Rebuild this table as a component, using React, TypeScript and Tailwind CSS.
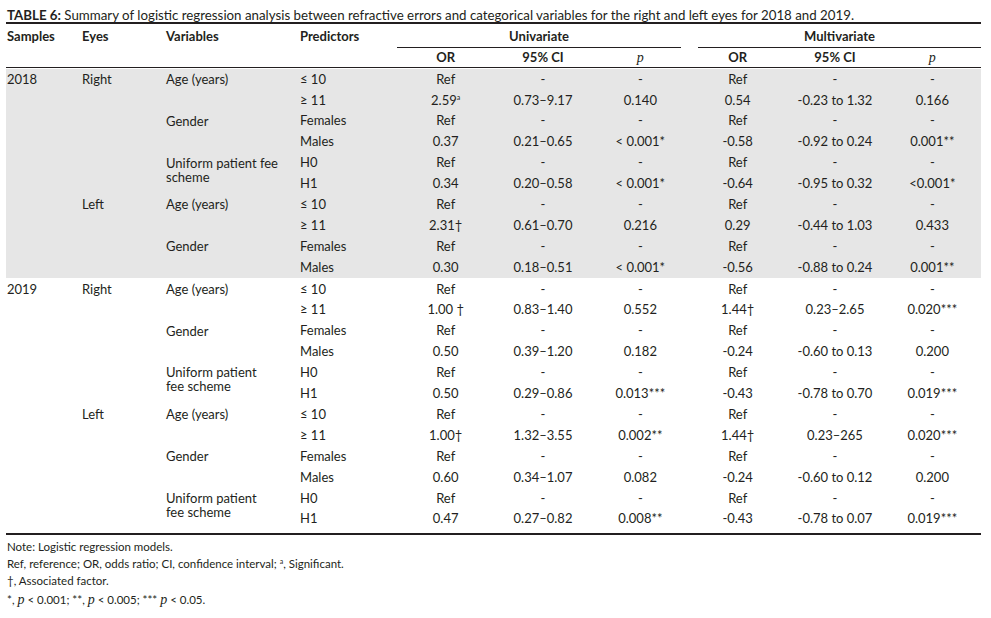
import type { ReactNode } from "react";

type Row = {
  s?: string;
  e?: string;
  v?: ReactNode;
  pred: string;
  vals: ReactNode[];
};

const REF = ["Ref", "-", "-", "Ref", "-", "-"];
const A = <sup className="text-[7px]">a</sup>;

const ROWS_2018: Row[] = [
  { s: "2018", e: "Right", v: "Age (years)", pred: "≤ 10", vals: REF },
  { pred: "≥ 11", vals: [<>2.59{A}</>, "0.73–9.17", "0.140", "0.54", "-0.23 to 1.32", "0.166"] },
  { v: "Gender", pred: "Females", vals: REF },
  { pred: "Males", vals: ["0.37", "0.21–0.65", "< 0.001*", "-0.58", "-0.92 to 0.24", "0.001**"] },
  { v: ["Uniform patient fee", "scheme"], pred: "H0", vals: REF },
  { pred: "H1", vals: ["0.34", "0.20–0.58", "< 0.001*", "-0.64", "-0.95 to 0.32", "<0.001*"] },
  { e: "Left", v: "Age (years)", pred: "≤ 10", vals: REF },
  { pred: "≥ 11", vals: ["2.31†", "0.61–0.70", "0.216", "0.29", "-0.44 to 1.03", "0.433"] },
  { v: "Gender", pred: "Females", vals: REF },
  { pred: "Males", vals: ["0.30", "0.18–0.51", "< 0.001*", "-0.56", "-0.88 to 0.24", "0.001**"] },
];

const ROWS_2019: Row[] = [
  { s: "2019", e: "Right", v: "Age (years)", pred: "≤ 10", vals: REF },
  { pred: "≥ 11", vals: ["1.00 †", "0.83–1.40", "0.552", "1.44†", "0.23–2.65", "0.020***"] },
  { v: "Gender", pred: "Females", vals: REF },
  { pred: "Males", vals: ["0.50", "0.39–1.20", "0.182", "-0.24", "-0.60 to 0.13", "0.200"] },
  { v: ["Uniform patient", "fee scheme"], pred: "H0", vals: REF },
  { pred: "H1", vals: ["0.50", "0.29–0.86", "0.013***", "-0.43", "-0.78 to 0.70", "0.019***"] },
  { e: "Left", v: "Age (years)", pred: "≤ 10", vals: REF },
  { pred: "≥ 11", vals: ["1.00†", "1.32–3.55", "0.002**", "1.44†", "0.23–265", "0.020***"] },
  { v: "Gender", pred: "Females", vals: REF },
  { pred: "Males", vals: ["0.60", "0.34–1.07", "0.082", "-0.24", "-0.60 to 0.12", "0.200"] },
  { v: ["Uniform patient", "fee scheme"], pred: "H0", vals: REF },
  { pred: "H1", vals: ["0.47", "0.27–0.82", "0.008**", "-0.43", "-0.78 to 0.07", "0.019***"] },
];

const COLS = "grid grid-cols-[75px_84px_134px_98px_repeat(6,1fr)]";

function Body({ rows, className }: { rows: Row[]; className?: string }) {
  return (
    <div className={`${COLS} auto-rows-[20.9px] ${className ?? ""}`}>
      {rows.map((r, i) => {
        const first = i % 2 === 0;
        const lines = Array.isArray(r.v) ? r.v : [r.v];
        return [
          <div key={`s${i}`} className="pl-px flex items-center">{r.s}</div>,
          <div key={`e${i}`} className="pl-px flex items-center">{r.e}</div>,
          first ? (
            <div key={`v${i}`} className="row-span-2 pl-px pt-[4px] flex flex-col">
              {lines.map((l, k) => (
                <span key={k} className="h-[14px] leading-[13px]">{l}</span>
              ))}
            </div>
          ) : null,
          <div key={`p${i}`} className="pl-px flex items-center">{r.pred}</div>,
          ...r.vals.map((v, j) => (
            <div key={`c${i}-${j}`} className="flex items-center justify-center whitespace-nowrap">{v}</div>
          )),
        ];
      })}
    </div>
  );
}

const P = <span className="font-['Liberation_Serif',serif] italic text-[14px]">p</span>;

export default function App() {
  return (
    <div className="bg-white w-[991px] h-[618px] text-[#231f20] font-['Lato','Open_Sans',sans-serif] text-[13px]">
      <div className="ml-[6px] w-[975px]">
        <div className="pt-[9px] leading-[13px] text-[13.3px] border-b-[2.5px] border-[#231f20] pl-px">
          <b>TABLE 6:</b> Summary of logistic regression analysis between refractive errors and categorical variables for the right and left eyes for 2018 and 2019.
        </div>

        <div className={`${COLS} h-[23px] font-bold`}>
          <div className="pl-px pt-[3px]">Samples</div>
          <div className="pl-px pt-[3px]">Eyes</div>
          <div className="pl-px pt-[3px]">Variables</div>
          <div className="pl-px pt-[3px]">Predictors</div>
          <div className="col-span-3 mr-[8px] border-b border-[#231f20] text-center pt-[3px]">Univariate</div>
          <div className="col-span-3 ml-[9px] border-b border-[#231f20] text-center pt-[3px]">Multivariate</div>
        </div>
        <div className={`${COLS} h-[21px] mb-px font-bold border-b-[1.5px] border-[#231f20]`}>
          <div />
          <div />
          <div />
          <div />
          <div className="flex items-center justify-center">OR</div>
          <div className="flex items-center justify-center">95% CI</div>
          <div className="flex items-center justify-center font-normal">{P}</div>
          <div className="flex items-center justify-center">OR</div>
          <div className="flex items-center justify-center">95% CI</div>
          <div className="flex items-center justify-center font-normal">{P}</div>
        </div>

        <Body rows={ROWS_2018} className="bg-[#e6e6e6]" />
        <Body rows={ROWS_2019} className="pt-px pb-[3px] border-b-2 border-[#231f20]" />

        <div className="pl-px pt-[3px] text-[11.5px] leading-[17px]">
          <div>Note: Logistic regression models.</div>
          <div>Ref, reference; OR, odds ratio; CI, confidence interval; <sup className="text-[7px]">a</sup>, Significant.</div>
          <div>†, Associated factor.</div>
          <div className="mt-[2px]">
            *, {P} &lt; 0.001; **, {P} &lt; 0.005; *** {P} &lt; 0.05.
          </div>
        </div>
      </div>
    </div>
  );
}
